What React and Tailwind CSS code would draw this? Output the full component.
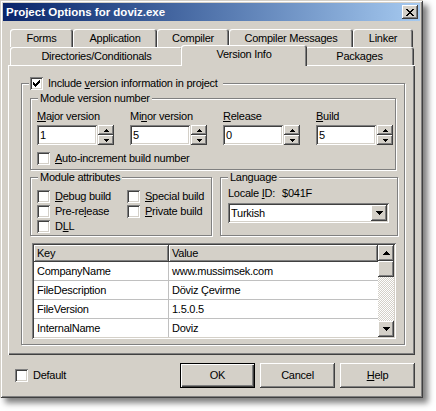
import React from "react";

const raised =
  "bg-[#d4d0c8] shadow-[inset_-1px_-1px_0_#404040,inset_1px_1px_0_#fff,inset_-2px_-2px_0_#808080]";
const sunken =
  "shadow-[inset_1px_1px_0_#808080,inset_-1px_-1px_0_#fff,inset_2px_2px_0_#404040,inset_-2px_-2px_0_#d4d0c8]";
const etched = "border border-[#808080] shadow-[inset_1px_1px_0_#fff,1px_1px_0_#fff]";

function Check({ checked }) {
  // classic 7x7 pixel tick
  const cols = [5, 6, 7, 6, 5, 4, 3];
  return (
    <span className={`block w-[13px] h-[13px] shrink-0 bg-white ${sunken}`}>
      {checked && (
        <svg width="13" height="13" viewBox="0 0 13 13" shapeRendering="crispEdges">
          {cols.map((y, i) => (
            <rect key={i} x={3 + i} y={y} width="1" height="3" fill="#000" />
          ))}
        </svg>
      )}
    </span>
  );
}

function Arrow({ up, size = 7 }) {
  const h = Math.ceil(size / 2);
  return (
    <svg width={size} height={h} viewBox={`0 0 ${size} ${h}`} shapeRendering="crispEdges">
      <polygon
        points={up ? `0,${h} ${size},${h} ${size / 2},0` : `0,0 ${size},0 ${size / 2},${h}`}
        fill="#000"
      />
    </svg>
  );
}

function CloseGlyph() {
  const rows = [0, 1, 2, 3, 4, 5, 6];
  return (
    <svg width="8" height="7" viewBox="0 0 8 7" shapeRendering="crispEdges">
      {rows.map((r) => {
        const l = r <= 3 ? r : 6 - r;
        return (
          <g key={r}>
            <rect x={l} y={r} width="2" height="1" fill="#000" />
            <rect x={6 - l} y={r} width="2" height="1" fill="#000" />
          </g>
        );
      })}
    </svg>
  );
}

function SpinEdit({ label, value }) {
  return (
    <div className="w-[93px] shrink-0">
      <div className="h-[14px] leading-[14px]">{label}</div>
      <div className="mt-[2px] flex gap-[1px]">
        <div className={`w-[60px] h-[20px] bg-white ${sunken} pl-[3px] flex items-center`}>
          {value}
        </div>
        <div className="flex flex-col w-[16px] h-[20px]">
          <div className={`h-[10px] flex items-center justify-center ${raised}`}>
            <Arrow up size={5} />
          </div>
          <div className={`h-[10px] flex items-center justify-center ${raised}`}>
            <Arrow size={5} />
          </div>
        </div>
      </div>
    </div>
  );
}

function CheckRow({ children, checked }) {
  return (
    <div className="flex items-center gap-[5px] h-[13px]">
      <Check checked={checked} />
      <span>{children}</span>
    </div>
  );
}

const tab =
  "h-[18px] flex items-center justify-center rounded-t-[3px] bg-[#d4d0c8] shadow-[inset_1px_1px_0_#fff,inset_-1px_0_0_#404040,inset_-2px_0_0_#808080]";

export default function App() {
  return (
    <div className="w-[436px] h-[411px] bg-white font-['Liberation_Sans',Arial,sans-serif] text-[11px] leading-[13px] tracking-[-0.25px] text-black">
      <div className="w-[423px] h-[398px] bg-[#d4d0c8] p-[3px] flex flex-col shadow-[inset_1px_1px_0_#d4d0c8,inset_-1px_-1px_0_#404040,inset_2px_2px_0_#fff,inset_-2px_-2px_0_#808080,5px_5px_6px_rgba(0,0,0,0.5)]">
        {/* title bar */}
        <div className="h-[18px] flex items-center bg-linear-to-r from-[#0a246a] to-[#a6caf0] pl-[3px] pr-[2px]">
          <span className="text-white font-bold text-[11.5px] tracking-normal">
            Project Options for doviz.exe
          </span>
          <div className={`ml-auto w-[16px] h-[14px] flex items-center justify-center ${raised}`}>
            <CloseGlyph />
          </div>
        </div>

        <div className="flex-1 flex flex-col px-[5px] pt-[8px]">
          {/* tabs, back row */}
          <div className="flex pl-[2px]">
            <div className={`${tab} w-[63px]`}>Forms</div>
            <div className={`${tab} w-[84px]`}>Application</div>
            <div className={`${tab} w-[72px]`}>Compiler</div>
            <div className={`${tab} w-[124px]`}>Compiler Messages</div>
            <div className={`${tab} w-[60px]`}>Linker</div>
          </div>
          {/* tabs, front row */}
          <div className="flex h-[18px] items-end pl-[2px]">
            <div className={`${tab} w-[173px]`}>Directories/Conditionals</div>
            <div className={`${tab} relative z-10 w-[126px] h-[21px] -mx-[2px] -mb-[1px] pb-[3px]`}>
              Version Info
            </div>
            <div className={`${tab} w-[109px]`}>Packages</div>
          </div>

          {/* page */}
          <div className="h-[290px] bg-[#d4d0c8] pt-[18px] pl-[13px] shadow-[inset_1px_1px_0_#fff,inset_-1px_-1px_0_#404040,inset_-2px_-2px_0_#808080]">
            <div className={`relative w-[384px] h-[262px] ${etched} pt-[14px] pl-[8px]`}>
              <div className="absolute left-[7px] top-[-7px] bg-[#d4d0c8] pl-[1px] pr-[5px] flex items-center gap-[5px]">
                <Check checked />
                <span>
                  Include <u>v</u>ersion information in project
                </span>
              </div>

              {/* Module version number */}
              <div className={`relative w-[366px] h-[72px] ${etched}`}>
                <div className="absolute left-[7px] top-[-7px] bg-[#d4d0c8] px-[2px]">
                  Module version number
                </div>
                <div className="flex pl-[6px] pt-[10px]">
                  <SpinEdit label={<><u>M</u>ajor version</>} value="1" />
                  <SpinEdit label={<>Mi<u>n</u>or version</>} value="5" />
                  <SpinEdit label={<><u>R</u>elease</>} value="0" />
                  <SpinEdit label={<><u>B</u>uild</>} value="5" />
                </div>
                <div className="pl-[6px] mt-[7px]">
                  <CheckRow>
                    <u>A</u>uto-increment build number
                  </CheckRow>
                </div>
              </div>

              <div className="flex gap-[8px] mt-[7px]">
                {/* Module attributes */}
                <div className={`relative w-[182px] h-[59px] ${etched} pl-[6px] pt-[12px]`}>
                  <div className="absolute left-[7px] top-[-7px] bg-[#d4d0c8] px-[2px]">
                    Module attributes
                  </div>
                  <div className="grid grid-cols-[90px_auto] gap-y-[2px]">
                    <CheckRow>
                      <u>D</u>ebug build
                    </CheckRow>
                    <CheckRow>
                      <u>S</u>pecial build
                    </CheckRow>
                    <CheckRow>
                      Pre-re<u>l</u>ease
                    </CheckRow>
                    <CheckRow>
                      <u>P</u>rivate build
                    </CheckRow>
                    <CheckRow>
                      D<u>L</u>L
                    </CheckRow>
                  </div>
                </div>

                {/* Language */}
                <div className={`relative w-[178px] h-[59px] ${etched} pl-[7px] pt-[9px]`}>
                  <div className="absolute left-[7px] top-[-7px] bg-[#d4d0c8] px-[2px]">
                    Language
                  </div>
                  <div className="flex">
                    <span>
                      Locale <u>I</u>D:
                    </span>
                    <span className="ml-[7px]">$041F</span>
                  </div>
                  <div className={`mt-[3px] w-[161px] h-[20px] bg-white ${sunken} flex items-center pl-[3px] pr-[2px]`}>
                    <span>Turkish</span>
                    <div className={`ml-auto w-[16px] h-[16px] flex items-center justify-center ${raised}`}>
                      <Arrow size={7} />
                    </div>
                  </div>
                </div>
              </div>

              {/* key / value grid */}
              <div className={`mt-[7px] ml-[2px] w-[364px] h-[96px] bg-white ${sunken} p-[2px] flex overflow-hidden`}>
                <div className="flex-1 flex flex-col overflow-hidden">
                  <div className="flex h-[17px] shrink-0">
                    <div className={`w-[135px] pl-[3px] flex items-center ${raised}`}>Key</div>
                    <div className={`flex-1 pl-[3px] flex items-center ${raised}`}>Value</div>
                  </div>
                  {[
                    ["CompanyName", "www.mussimsek.com"],
                    ["FileDescription", "Döviz Çevirme"],
                    ["FileVersion", "1.5.0.5"],
                    ["InternalName", "Doviz"],
                  ].map(([k, v]) => (
                    <div key={k} className="flex h-[19px] shrink-0 border-b border-[#c0c0c0]">
                      <div className="w-[135px] pl-[3px] flex items-center border-r border-[#c0c0c0]">{k}</div>
                      <div className="flex-1 pl-[3px] flex items-center">{v}</div>
                    </div>
                  ))}
                </div>
                <div className="w-[16px] flex flex-col">
                  <div className={`h-[16px] flex items-center justify-center ${raised}`}>
                    <Arrow up size={7} />
                  </div>
                  <div className={`h-[16px] ${raised}`} />
                  <div className="flex-1 bg-[repeating-conic-gradient(#fff_0_25%,#d4d0c8_0_50%)] bg-[length:2px_2px]" />
                  <div className={`h-[16px] flex items-center justify-center ${raised}`}>
                    <Arrow size={7} />
                  </div>
                </div>
              </div>
            </div>
          </div>

          {/* footer */}
          <div className="flex-1 flex items-start pt-[8px] pl-[7px]">
            <div className="h-[25px] flex items-center gap-[5px]">
              <Check />
              <span>Default</span>
            </div>
            <div className="ml-auto flex gap-[5px]">
              <div className="w-[75px] h-[25px] flex items-center justify-center border border-black bg-[#d4d0c8] shadow-[inset_1px_1px_0_#fff,inset_-1px_-1px_0_#404040,inset_-2px_-2px_0_#808080]">
                OK
              </div>
              <div className={`w-[75px] h-[25px] flex items-center justify-center ${raised}`}>Cancel</div>
              <div className={`w-[75px] h-[25px] flex items-center justify-center ${raised}`}>
                <span>
                  <u>H</u>elp
                </span>
              </div>
            </div>
          </div>
        </div>
      </div>
    </div>
  );
}
